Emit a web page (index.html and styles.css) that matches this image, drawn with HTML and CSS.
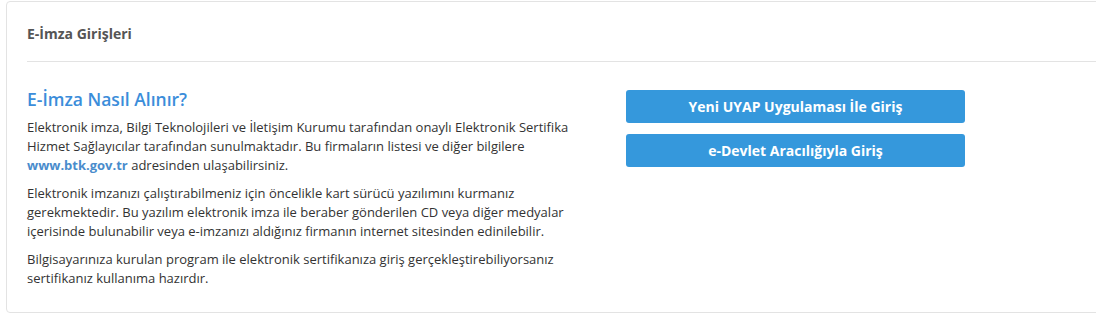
FILE: index.html
```html
<!DOCTYPE html>
<html lang="tr">
<head>
<meta charset="utf-8">
<link rel="stylesheet" href="styles.css">
</head>
<body>
<div class="card">
  <div class="card-header">
    <div class="card-title">E-İmza Girişleri</div>
  </div>
  <div class="card-body">
    <div class="info">
      <h2 class="info-title">E-İmza Nasıl Alınır?</h2>
      <p>Elektronik imza, Bilgi Teknolojileri ve İletişim Kurumu tarafından onaylı Elektronik Sertifika Hizmet Sağlayıcılar tarafından sunulmaktadır. Bu firmaların listesi ve diğer bilgilere <a class="link" href="#">www.btk.gov.tr</a> adresinden ulaşabilirsiniz.</p>
      <p>Elektronik imzanızı çalıştırabilmeniz için öncelikle kart sürücü yazılımını kurmanız gerekmektedir. Bu yazılım elektronik imza ile beraber gönderilen CD veya diğer medyalar içerisinde bulunabilir veya e-imzanızı aldığınız firmanın internet sitesinden edinilebilir.</p>
      <p>Bilgisayarınıza kurulan program ile elektronik sertifikanıza giriş gerçekleştirebiliyorsanız sertifikanız kullanıma hazırdır.</p>
    </div>
    <div class="actions">
      <a class="btn" href="#">Yeni UYAP Uygulaması İle Giriş</a>
      <a class="btn" href="#">e-Devlet Aracılığıyla Giriş</a>
    </div>
  </div>
</div>
</body>
</html>
```
FILE: styles.css
```css
html, body {
  margin: 0;
  padding: 0;
  background: #fff;
}
body {
  font-family: "Open Sans", "Liberation Sans", sans-serif;
  font-size: 13px;
  color: #333;
  padding: 1px 0 0 6px;
  overflow: hidden;
}
.card {
  width: 1200px;
  height: 312px;
  border: 1px solid #e3e3e3;
  border-radius: 4px;
  box-sizing: border-box;
  background: #fff;
}
.card-header {
  margin-left: 20px;
  height: 60px;
  box-sizing: border-box;
  border-bottom: 1px solid #e3e3e3;
  display: flex;
  align-items: center;
  padding-top: 4px;
}
.card-title {
  font-weight: 700;
  font-size: 14px;
  color: #555;
}
.card-body {
  display: flex;
  padding: 25px 20px 0 20px;
}
.info {
  width: 562px;
  margin-right: 37px;
}
.info-title {
  margin: 0 0 7px 0;
  font-size: 17.5px;
  font-weight: 600;
  color: #3b8dda;
  line-height: 24px;
}
.info p {
  margin: 0 0 9px 0;
  line-height: 19px;
}
.link {
  color: #4a8ccc;
  font-weight: 700;
  text-decoration: none;
}
.actions {
  display: flex;
  flex-direction: column;
  gap: 11px;
  padding-top: 3px;
}
.btn {
  display: flex;
  align-items: center;
  justify-content: center;
  width: 339px;
  height: 33px;
  background: #3598dc;
  color: #fff;
  border-radius: 3px;
  font-weight: 700;
  font-size: 14px;
  text-decoration: none;
}
```
